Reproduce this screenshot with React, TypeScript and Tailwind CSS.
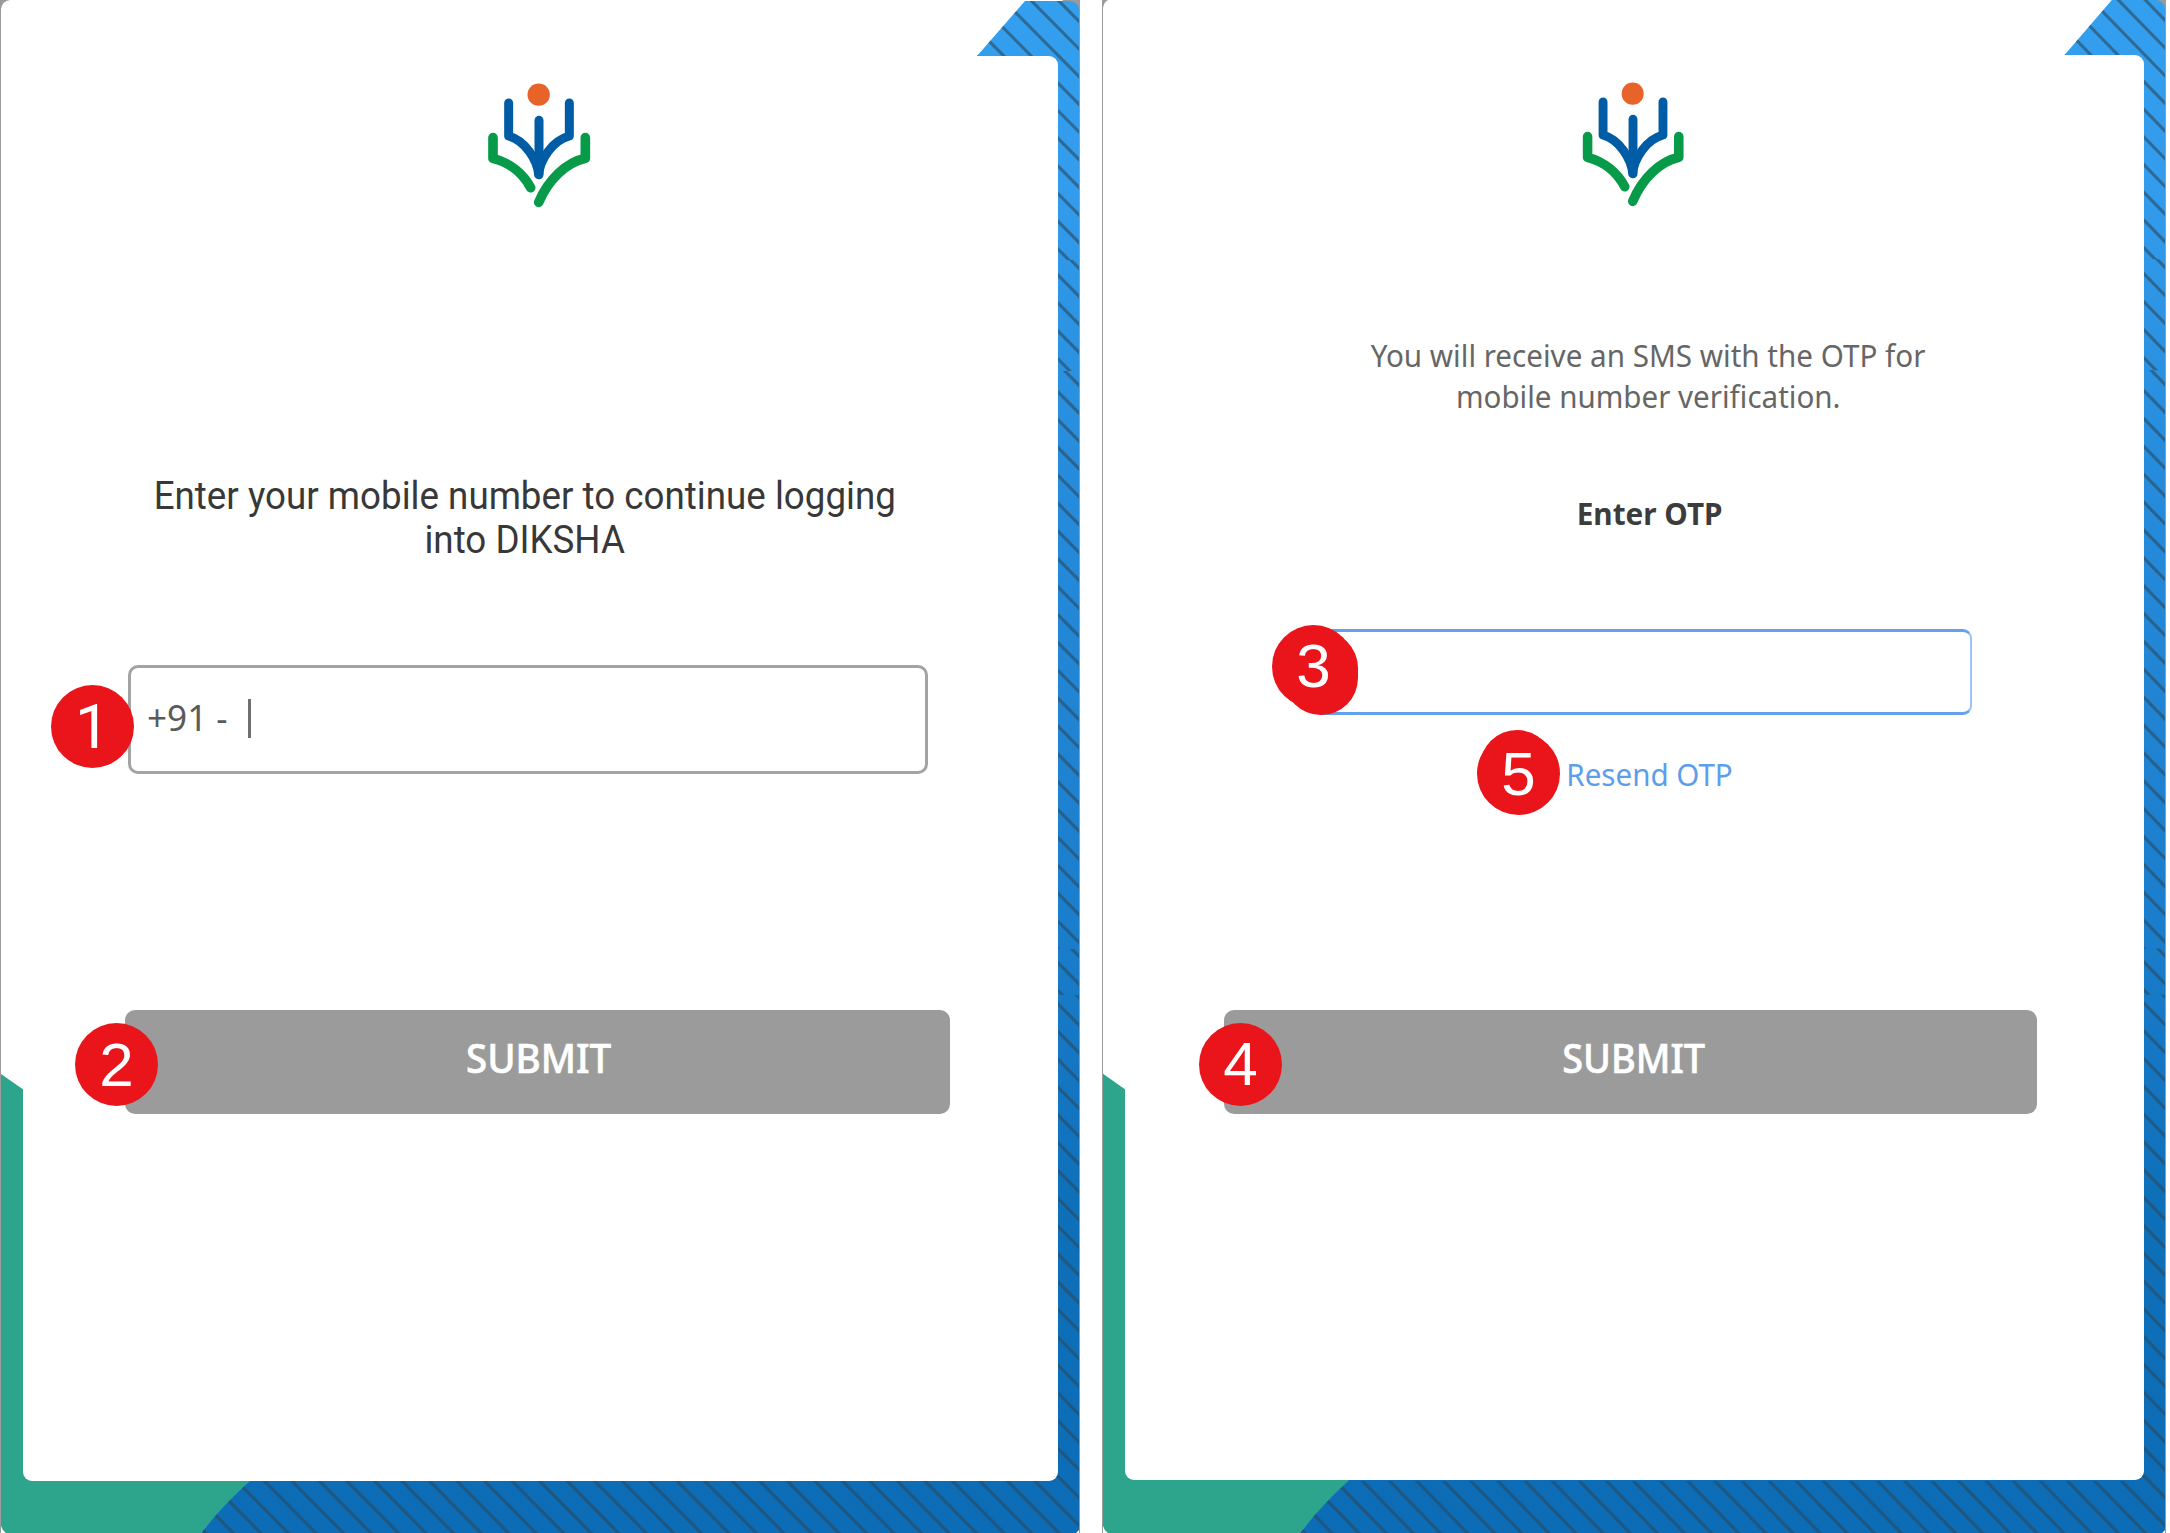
import type { ReactNode } from "react";

// Stripe runs down the right-hand ribbon: [clip top, clip bottom, first y, count, step]
const STRIPE_RUNS = [
  [0, 260, 0, 10, 27.67],
  [260, 371, 247, 5, 28],
  [371, 949, 364, 22, 27.86],
  [949, 995, 935, 3, 27.8],
  [995, 1533, 976, 52, 27.8],
];

function Backdrop({ id, className }: { id: string; className: string }) {
  return (
    <svg
      className={className}
      viewBox="0 0 1080 1533"
      preserveAspectRatio="none"
      aria-hidden="true"
    >
      <defs>
        <linearGradient id={`${id}-blue`} gradientUnits="userSpaceOnUse" x1="0" y1="0" x2="0" y2="1533">
          <stop offset="0" stopColor="#339fef" />
          <stop offset="0.12" stopColor="#339cec" />
          <stop offset="0.3" stopColor="#278cdc" />
          <stop offset="0.6" stopColor="#1b7ecc" />
          <stop offset="0.78" stopColor="#0f70ba" />
          <stop offset="1" stopColor="#0c6cb5" />
        </linearGradient>
        <clipPath id={`${id}-ribbon`}>
          <path d="M1025 1H1079V1533H201Q224 1504 250 1481H1046V56H977Z" />
        </clipPath>
        {STRIPE_RUNS.map(([top, bottom], i) => (
          <clipPath id={`${id}-run${i}`} key={i}>
            <rect x="0" y={top} width="1080" height={bottom - top} />
          </clipPath>
        ))}
      </defs>
      <path d="M1062 0H1080V16Z" fill="#9b9b9b" />
      <path d="M0 0H10Q2 1 1 9L0 10Z" fill="#9b9b9b" />
      <path d="M1 1074L24 1090V1470H260V1482Q224 1504 201 1533H6Q2 1530 1 1526Z" fill="#2ca58c" />
      <path
        d="M1025 1H1070Q1078 2 1079 9V1530L1076 1533H201Q224 1504 250 1481V1470H1046V56H977Z"
        fill={`url(#${id}-blue)`}
      />
      <g clipPath={`url(#${id}-ribbon)`} stroke="#2b4a60" strokeOpacity="0.62" strokeWidth="3.1">
        {STRIPE_RUNS.map(([, , first, count, step], i) => (
          <g key={i} clipPath={`url(#${id}-run${i})`}>
            {Array.from({ length: count }, (_, k) => {
              const y = first + k * step;
              return <path key={k} d={`M158 ${y - 909}L1098 ${y + 40.4}`} />;
            })}
          </g>
        ))}
      </g>
      <path d="M0.5 0V1533M1079.5 0V1533" stroke="#9b9b9b" strokeWidth="1" />
    </svg>
  );
}

function Logo({ className }: { className: string }) {
  return (
    <svg className={className} viewBox="0 0 480 480" preserveAspectRatio="none" fill="none" strokeLinecap="round">
      <circle cx="236" cy="104" r="33.5" fill="#e8632a" />
      <g stroke="#005ca5" strokeWidth="27" strokeLinejoin="round">
        <path d="M146 129V228C196 242 232 300 236 344C240 300 276 242 328 228V129" />
        <path d="M237 181V344" />
        <path d="M222 285L237 340L250 285" strokeWidth="16" />
      </g>
      <g stroke="#069a49" strokeWidth="29" strokeLinejoin="round">
        <path d="M99 233V295C150 308 190 342 212 383" />
        <path d="M376 233V295C318 308 266 358 236 427" />
      </g>
    </svg>
  );
}

function Badge({ className, children }: { className: string; children: ReactNode }) {
  return (
    <span
      className={`absolute z-10 flex size-[83px] items-center justify-center rounded-full bg-[#ea151b] text-[62px] leading-none font-normal text-white ${className}`}
    >
      {children}
    </span>
  );
}

function MobilePanel() {
  return (
    <section className="relative h-[1533px] w-[1080px] shrink-0 overflow-hidden bg-white pt-14 pl-[23px]">
      <Backdrop id="mobile" className="absolute top-0 left-0 h-[1533px] w-[1080px]" />
      <div className="relative flex h-[1425px] w-[1035px] flex-col rounded-[9px] rounded-tl-none bg-white">
        <Logo className="mt-1 ml-[437px] size-40" />
        <p className="mt-[254px] ml-[102px] w-[800px] text-center font-[Roboto,sans-serif] text-[38px] leading-11 whitespace-nowrap text-[#383838]">
          <span className="inline-block scale-x-[0.967]">Enter your mobile number to continue logging</span>
          <br />
          <span className="inline-block scale-x-[0.967]">into DIKSHA</span>
        </p>
        <div className="relative mt-[103px] ml-[105px] flex h-[109px] w-[800px] items-center rounded-[10px] border-3 border-[#a3a3a3] pb-[3px] pl-4 font-['Noto_Sans',sans-serif] text-[36px] text-[#5a5a5a]">
          <span className="inline-block origin-left scale-x-[0.975] whitespace-pre">+91 - </span>
          <i className="absolute top-[31px] left-[117px] h-[39px] w-[3px] bg-[#707070]" />
          <Badge className="top-[17px] -left-20 font-[Roboto,sans-serif]">1</Badge>
        </div>
        <button className="relative mt-[236px] ml-[102px] h-[104px] w-[825px] rounded-[10px] bg-[#9b9b9b] pb-[7px] pl-[3px] font-['Noto_Sans',sans-serif] text-[39px] font-medium text-white">
          <span className="inline-block scale-x-[0.985] [-webkit-text-stroke:0.6px_white]">SUBMIT</span>
          <Badge className="top-[13px] -left-[50px] font-['Liberation_Sans',sans-serif]">2</Badge>
        </button>
      </div>
    </section>
  );
}

function OtpPanel() {
  return (
    <section className="relative h-[1533px] w-[1064px] shrink-0 overflow-hidden bg-white pt-[55px] pl-[22.7px] font-['Noto_Sans',sans-serif]">
      <Backdrop id="otp" className="absolute -top-px left-0 h-[1534px] w-[1064px]" />
      <div className="relative flex h-[1425px] w-[1019px] flex-col rounded-[9px] rounded-tl-none bg-white">
        <Logo className="mt-1 ml-[430px] h-40 w-[158px]" />
        <p className="mt-[116px] ml-[223.3px] w-[600px] text-center text-[30px] leading-[41px] whitespace-nowrap text-[#666]">
          <span className="inline-block scale-x-[0.987]">You will receive an SMS with the OTP for</span>
          <br />
          <span className="inline-block scale-x-[0.985]">mobile number verification.</span>
        </p>
        <p className="mt-[76px] ml-[375.3px] w-[300px] text-center text-[30px] leading-[41px] font-bold text-[#3c3c3c]">
          <span className="inline-block scale-x-[0.99]">Enter OTP</span>
        </p>
        <div className="relative mt-[94.5px] ml-[187.3px] h-[86px] w-[660px] rounded-[9px] border-y-3 border-x-2 border-[#64a1ec] border-r-[#9dc4f4]">
          <i className="absolute top-[-1px] -left-[30px] h-[84px] w-[74px] rounded-full bg-[#ea151b]" />
          <Badge className="-top-[7px] -left-[42px] font-['Liberation_Sans',sans-serif]">3</Badge>
        </div>
        <div className="relative mt-[39px] ml-[442.3px] h-[41px] w-[164px] text-center text-[30px] leading-[41px] whitespace-nowrap text-[#5c9eeb]">
          <span className="relative -left-0.5 inline-block scale-x-[0.985]">Resend OTP</span>
          <i className="absolute -top-[23.5px] -left-[87px] h-[80px] w-[74px] rounded-full bg-[#ea151b]" />
          <Badge className="-top-[22px] -left-[90px] pt-0.5 font-['Liberation_Sans',sans-serif]">5</Badge>
        </div>
        <button className="relative mt-[215px] ml-[99.3px] h-[104px] w-[813px] rounded-[10px] bg-[#9b9b9b] pb-[7px] pl-[6px] text-[39px] font-medium text-white">
          <span className="inline-block scale-x-[0.97] [-webkit-text-stroke:0.6px_white]">SUBMIT</span>
          <Badge className="top-[13px] -left-[25px] font-['Liberation_Sans',sans-serif]">4</Badge>
        </button>
      </div>
    </section>
  );
}

export default function App() {
  return (
    <main className="flex h-[1533px] w-[2170px] gap-[22px] overflow-hidden bg-white">
      <MobilePanel />
      <OtpPanel />
    </main>
  );
}
